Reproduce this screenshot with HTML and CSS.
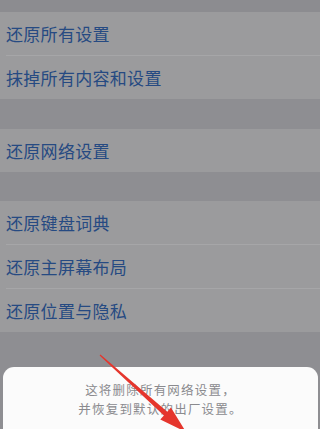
FILE: index.html
```html
<!DOCTYPE html>
<html lang="zh-CN">
<head>
<meta charset="utf-8">
<link rel="stylesheet" href="styles.css">
</head>
<body>
<div class="page">
  <div class="gap gap-top"></div>
  <div class="group">
    <div class="row">还原所有设置</div>
    <div class="row">抹掉所有内容和设置</div>
  </div>
  <div class="gap gap-a"></div>
  <div class="group">
    <div class="row">还原网络设置</div>
  </div>
  <div class="gap gap-b"></div>
  <div class="group">
    <div class="row">还原键盘词典</div>
    <div class="row">还原主屏幕布局</div>
    <div class="row">还原位置与隐私</div>
  </div>
  <div class="gap gap-c"></div>
  <div class="sheet">
    <div class="sheet-line">这将删除所有网络设置，</div>
    <div class="sheet-line">并恢复到默认的出厂设置。</div>
  </div>
</div>
<svg class="arrow" width="320" height="429" viewBox="0 0 320 429">
  <polygon fill="#e5362d" points="99.6,355.4 100.4,354.6 167.3,411.7 170.9,407.6 186,432 160.3,419.6 163.9,415.5"/>
</svg>
</body>
</html>
```
FILE: styles.css
```css
html, body {
  margin: 0;
  padding: 0;
  width: 320px;
  height: 429px;
  overflow: hidden;
  background: #8e8e92;
}
.page {
  display: flex;
  flex-direction: column;
  height: 429px;
  font-family: "Noto Sans CJK SC", "Noto Sans", sans-serif;
}
.gap { flex: none; background: #8e8e92; }
.gap-top { height: 12px; background: #8c8c90; }
.gap-a { height: 30px; }
.gap-b { height: 29px; }
.gap-c { height: 35px; }
.group {
  flex: none;
  background: #9b9b9d;
}
.row {
  height: 43px;
  display: flex;
  align-items: center;
  padding-left: 6px;
  font-size: 17px;
  color: #264a82;
  letter-spacing: 0.3px;
  box-sizing: border-box;
}
.row + .row {
  height: 44px;
  border-top: 1px solid #a6a6a8;
  margin-left: 6px;
  padding-left: 0;
}
.sheet {
  flex: 1;
  margin: 0 2px 0 3px;
  background: #fbfbfb;
  border-radius: 11px 11px 0 0;
  padding-top: 14px;
  display: flex;
  flex-direction: column;
  align-items: center;
}
.sheet-line {
  height: 18.5px;
  font-size: 12.5px;
  line-height: 18.5px;
  color: #8a8a8e;
  letter-spacing: 1.2px;
}
.arrow {
  position: absolute;
  left: 0;
  top: 0;
}
```
